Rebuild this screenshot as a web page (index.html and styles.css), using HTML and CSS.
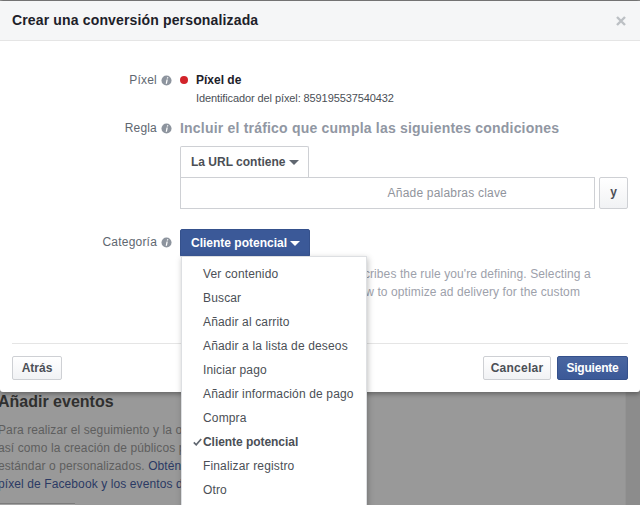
FILE: index.html
```html
<!DOCTYPE html>
<html lang="es">
<head>
<meta charset="utf-8">
<title>Crear una conversión personalizada</title>
<link rel="stylesheet" href="styles.css">
</head>
<body>
<div class="page">
  <div class="backdrop">
    <div class="bg-main">
      <div class="bg-shift">
        <h2 class="bg-title">Añadir eventos</h2>
        <p class="bg-text">Para realizar el seguimiento y la optimización de las conversiones,<br>así como la creación de públicos personalizados, añade eventos<br>estándar o personalizados. <a class="bg-link">Obtén más información sobre el<br>píxel de Facebook y los eventos de conversión.</a></p>
      </div>
      <div class="bg-button"></div>
    </div>
    <div class="bg-side"></div>
  </div>

  <div class="modal">
    <header class="modal-head">
      <h1 class="modal-title">Crear una conversión personalizada</h1>
      <svg class="close" viewBox="0 0 10 10"><path d="M1 1l8 8M9 1l-8 8"/></svg>
    </header>
    <div class="modal-body">
      <div class="row row-pixel">
        <div class="label">Píxel <svg class="info" viewBox="0 0 12 12"><circle cx="6" cy="6" r="5.5"/><path d="M6.6 2.4h1.4l-.3 1.4H6.3zM6 4.8h1.4l-.9 4.8H5.1z"/></svg></div>
        <div class="field">
          <div class="pixel-name"><span class="dot"></span>Píxel de</div>
          <div class="pixel-id">Identificador del píxel: 859195537540432</div>
        </div>
      </div>
      <div class="row row-rule">
        <div class="label">Regla <svg class="info" viewBox="0 0 12 12"><circle cx="6" cy="6" r="5.5"/><path d="M6.6 2.4h1.4l-.3 1.4H6.3zM6 4.8h1.4l-.9 4.8H5.1z"/></svg></div>
        <div class="field">
          <div class="rule-head">Incluir el tráfico que cumpla las siguientes condiciones</div>
          <button class="btn-url">La URL contiene <span class="caret"></span></button>
          <div class="keywords">
            <div class="input">Añade palabras clave</div>
            <button class="btn-y">y</button>
          </div>
        </div>
      </div>
      <div class="row row-cat">
        <div class="label">Categoría <svg class="info" viewBox="0 0 12 12"><circle cx="6" cy="6" r="5.5"/><path d="M6.6 2.4h1.4l-.3 1.4H6.3zM6 4.8h1.4l-.9 4.8H5.1z"/></svg></div>
        <div class="field field-cat">
          <button class="btn-cat">Cliente potencial <span class="caret caret-white"></span></button>
          <p class="cat-desc">Choose a category that best describes the rule you're defining. Selecting a<br>category helps us understand how to optimize ad delivery for the custom<br>conversion.</p>
          <ul class="menu">
            <li>Ver contenido</li>
            <li>Buscar</li>
            <li>Añadir al carrito</li>
            <li>Añadir a la lista de deseos</li>
            <li>Iniciar pago</li>
            <li>Añadir información de pago</li>
            <li>Compra</li>
            <li class="selected"><svg class="check" viewBox="0 0 9 8"><path d="M.8 4.4l2.4 2.4L8.2 1"/></svg>Cliente potencial</li>
            <li>Finalizar registro</li>
            <li>Otro</li>
          </ul>
        </div>
      </div>
    </div>
    <footer class="modal-foot">
      <button class="btn btn-back">Atrás</button>
      <div class="foot-right">
        <button class="btn btn-cancel">Cancelar</button>
        <button class="btn btn-primary">Siguiente</button>
      </div>
    </footer>
  </div>
</div>
</body>
</html>
```
FILE: styles.css
```css
* { box-sizing: border-box; }
html, body { margin: 0; padding: 0; }
body { font-family: "Liberation Sans", Arial, sans-serif; font-size: 12px; color: #4b4f56; }
button { font-family: inherit; margin: 0; cursor: pointer; }

.page { position: relative; width: 640px; height: 505px; overflow: hidden; background: #999; }

.backdrop { display: flex; height: 505px; padding-top: 392px; }
.bg-main { width: 625px; flex: none; white-space: nowrap; overflow: hidden; }
.bg-shift { transform: translateX(-2px); }
.bg-side { flex: 1; margin-top: -392px; background: #8c8c8c; border-left: 1px solid #949494; }
.bg-title { margin: 0; font-size: 16px; line-height: 20px; color: #2f2f2f; }
.bg-text { margin: 9px 0 0; font-size: 12px; line-height: 18px; letter-spacing: .1px; color: #5e5e5e; }
.bg-link { color: #2b3a64; }
.bg-button { width: 75px; height: 8px; margin-top: 10px; background: #a3a3a3; border-top: 1px solid #7c7c7c; }

.modal {
  position: absolute; left: 0; top: 0; width: 640px; height: 392px;
  background: #fff; border-top: 1px solid #737373; border-radius: 3px;
  box-shadow: 0 2px 5px rgba(0,0,0,.35);
  display: flex; flex-direction: column;
}
.modal-head {
  height: 40px; flex: none; background: #f5f6f7; border-bottom: 1px solid #e5e5e5;
  display: flex; align-items: center; justify-content: space-between; padding: 0 14px 0 12px;
}
.modal-title { margin: 0 0 2px; font-size: 14px; font-weight: bold; letter-spacing: .15px; color: #1d2129; }
.close { width: 10px; height: 10px; }
.close path { stroke: #bcc0c4; stroke-width: 2.4; fill: none; }

.modal-body { flex: 1; padding-top: 30px; min-height: 0; }
.row { display: grid; grid-template-columns: 172px 1fr; column-gap: 8px; }
.label { display: flex; justify-content: flex-end; align-items: center; gap: 4px; height: 18px; line-height: 18px; font-size: 12px; color: #606770; letter-spacing: .2px; }
.info { width: 11px; height: 11px; flex: none; }
.info circle { fill: #8d949e; }
.info path { fill: #fff; }
.field { min-width: 0; }

.pixel-name { display: flex; align-items: center; height: 18px; font-weight: bold; color: #1d2129; font-size: 12px; }
.dot { width: 8px; height: 8px; border-radius: 50%; background: #d2232a; margin-right: 8px; }
.pixel-id { font-size: 11px; line-height: 18px; letter-spacing: -.1px; color: #4b4f56; padding-left: 16px; }

.row-rule { margin-top: 12px; }
.rule-head { height: 18px; line-height: 18px; font-size: 14px; font-weight: bold; color: #9197a3; letter-spacing: .2px; }
.btn-url {
  display: block; width: 129px; height: 31px; margin-top: 9px; padding: 0 0 0 10px; text-align: left;
  background: #fff; border: 1px solid #ced0d4; border-bottom: 0; border-radius: 2px 2px 0 0;
  font-size: 12px; font-weight: bold; color: #4b4f56;
}
.caret { display: inline-block; width: 0; height: 0; margin-left: 0; vertical-align: 1px; border: 5px solid transparent; border-bottom: 0; border-top: 5px solid #606770; }
.caret-white { border-top-color: #fff; }
.keywords { display: flex; gap: 4px; width: 448px; height: 32px; }
.input {
  flex: 1; border: 1px solid #ced0d4; display: flex; align-items: center; justify-content: flex-end;
  padding-right: 87px; font-size: 12px; letter-spacing: .2px; color: #90949c;
}
.btn-y {
  width: 29px; padding: 0 0 3px; border: 1px solid #ced0d4; border-radius: 2px;
  background: linear-gradient(#fff, #f1f2f4); font-size: 12px; font-weight: bold; color: #4b4f56;
}

.row-cat { margin-top: 20px; }
.row-cat .label { height: 26px; }
.field-cat { position: relative; }
.btn-cat {
  display: block; width: 130px; height: 28px; padding: 0 0 0 10px; text-align: left;
  background: #3b5998; border: 1px solid #35518c; border-radius: 2px;
  font-size: 12px; font-weight: bold; color: #fff;
}
.cat-desc { margin: 8px 0 0 8px; font-size: 12px; line-height: 18px; letter-spacing: .1px; color: #9da1ab; white-space: nowrap; }
.menu {
  position: absolute; left: 1px; top: 27px; width: 186px; margin: 0; padding: 5px 0;
  list-style: none; background: #fff; border: 1px solid #dddfe2; border-bottom: 0;
  box-shadow: 1px 2px 6px rgba(0,0,0,.25);
}
.menu li { position: relative; height: 24px; line-height: 24px; padding-left: 21px; font-size: 12px; letter-spacing: .15px; color: #4b4f56; white-space: nowrap; }
.menu .selected { font-weight: bold; letter-spacing: -.05px; }
.check { position: absolute; left: 11px; top: 8px; width: 9px; height: 8px; }
.check path { stroke: #606770; stroke-width: 1.7; fill: none; }

.modal-foot {
  flex: none; height: 49px; margin: 0 12px; border-top: 1px solid #e5e5e5;
  display: flex; justify-content: space-between; padding-top: 12px;
}
.foot-right { display: flex; gap: 6px; }
.btn {
  height: 24px; padding: 0; border: 1px solid #ced0d4; border-radius: 2px;
  background: linear-gradient(#fff, #f1f2f4); font-size: 12px; font-weight: bold; color: #4b4f56;
}
.btn-back { width: 50px; }
.btn-cancel { width: 68px; letter-spacing: .25px; }
.btn-primary { width: 71px; letter-spacing: -.2px; background: linear-gradient(#4a66a0, #3b5998); border-color: #35518c; color: #fff; }
```
